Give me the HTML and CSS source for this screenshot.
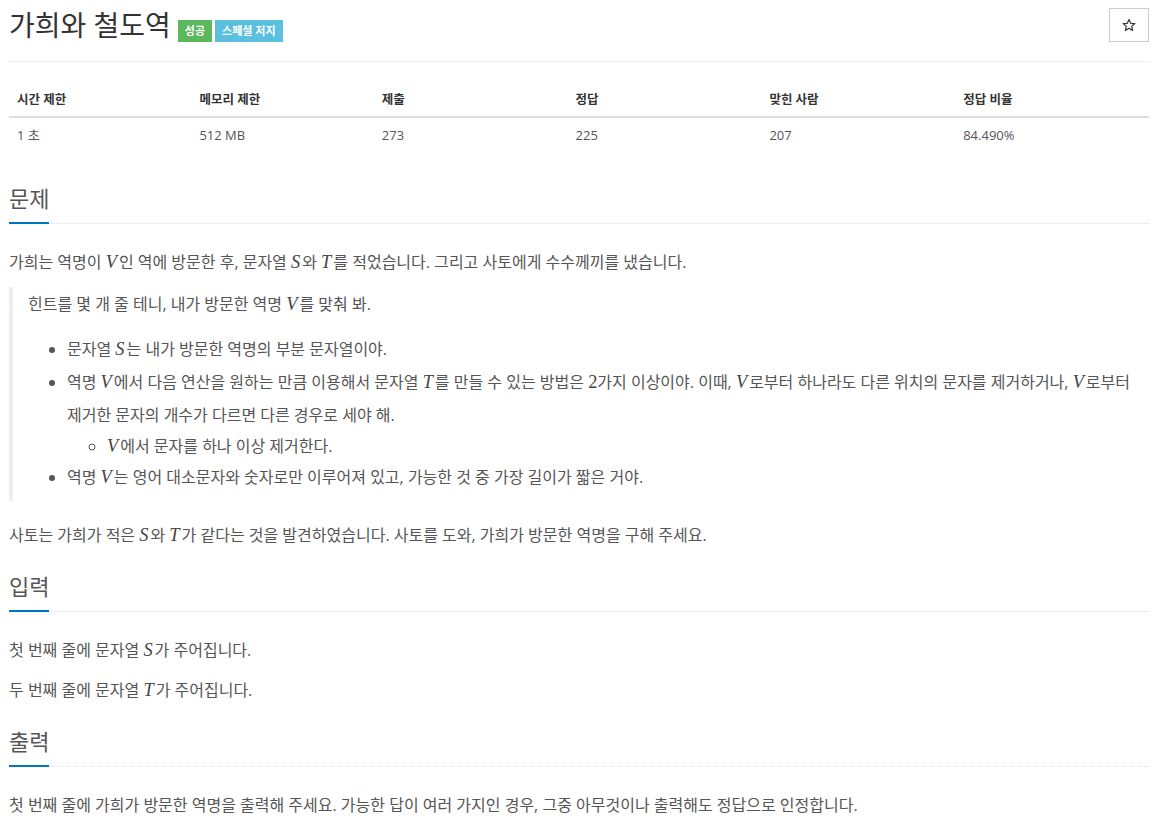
FILE: index.html
```html
<!DOCTYPE html>
<html lang="ko">
<head>
<meta charset="utf-8">
<title>가희와 철도역</title>
<link rel="stylesheet" href="styles.css">
</head>
<body>
<div class="container">
  <div class="page-header">
    <h1 class="title">
      <span class="title-text">가희와 철도역</span>
      <span class="label label-success">성공</span>
      <span class="label label-info">스페셜 저지</span>
    </h1>
    <button class="star-btn" type="button" aria-label="즐겨찾기">
      <svg width="14" height="14" viewBox="0 0 24 24"><path d="M12 2.5l2.9 6.6 7.1.6-5.4 4.7 1.6 7-6.2-3.7-6.2 3.7 1.6-7L2 9.7l7.1-.6z" fill="none" stroke="#333" stroke-width="2" stroke-linejoin="round"/></svg>
    </button>
  </div>

  <table class="info-table">
    <colgroup>
      <col class="c16"><col class="c16"><col class="c17"><col class="c17"><col class="c17"><col class="c17">
    </colgroup>
    <thead>
      <tr><th>시간 제한</th><th>메모리 제한</th><th>제출</th><th>정답</th><th>맞힌 사람</th><th>정답 비율</th></tr>
    </thead>
    <tbody>
      <tr><td>1 초</td><td>512 MB</td><td>273</td><td>225</td><td>207</td><td>84.490%</td></tr>
    </tbody>
  </table>

  <section class="problem-section">
    <div class="headline"><h2>문제</h2></div>
    <div class="problem-text">
      <p>가희는 역명이 <i class="m">V</i>인 역에 방문한 후, 문자열 <i class="m">S</i>와 <i class="m">T</i>를 적었습니다. 그리고 사토에게 수수께끼를 냈습니다.</p>
      <blockquote>
        <p>힌트를 몇 개 줄 테니, 내가 방문한 역명 <i class="m">V</i>를 맞춰 봐.</p>
        <ul>
          <li>문자열 <i class="m">S</i>는 내가 방문한 역명의 부분 문자열이야.</li>
          <li>역명 <i class="m">V</i>에서 다음 연산을 원하는 만큼 이용해서 문자열 <i class="m">T</i>를 만들 수 있는 방법은 <span class="mn">2</span>가지 이상이야. 이때, <i class="m">V</i>로부터 하나라도 다른 위치의 문자를 제거하거나, <i class="m">V</i>로부터 제거한 문자의 개수가 다르면 다른 경우로 세야 해.
            <ul>
              <li><i class="m">V</i>에서 문자를 하나 이상 제거한다.</li>
            </ul>
          </li>
          <li>역명 <i class="m">V</i>는 영어 대소문자와 숫자로만 이루어져 있고, 가능한 것 중 가장 길이가 짧은 거야.</li>
        </ul>
      </blockquote>
      <p>사토는 가희가 적은 <i class="m">S</i>와 <i class="m">T</i>가 같다는 것을 발견하였습니다. 사토를 도와, 가희가 방문한 역명을 구해 주세요.</p>
    </div>
  </section>

  <section class="problem-section">
    <div class="headline"><h2>입력</h2></div>
    <div class="problem-text">
      <p>첫 번째 줄에 문자열 <i class="m">S</i>가 주어집니다.</p>
      <p>두 번째 줄에 문자열 <i class="m">T</i>가 주어집니다.</p>
    </div>
  </section>

  <section class="problem-section">
    <div class="headline"><h2>출력</h2></div>
    <div class="problem-text">
      <p>첫 번째 줄에 가희가 방문한 역명을 출력해 주세요. 가능한 답이 여러 가지인 경우, 그중 아무것이나 출력해도 정답으로 인정합니다.</p>
    </div>
  </section>
</div>
</body>
</html>
```

FILE: styles.css
```css
html, body {
  margin: 0;
  padding: 0;
  background: #fff;
}
body {
  font-family: "Open Sans", "Noto Sans CJK KR", sans-serif;
  color: #555;
  font-size: 14px;
}
.container {
  padding: 0 9px;
}
.page-header {
  display: flex;
  align-items: flex-start;
  justify-content: space-between;
  padding-top: 6px;
  padding-bottom: 17px;
  border-bottom: 1px solid #eee;
}
.title {
  margin: 0;
  display: flex;
  align-items: center;
  font-weight: 400;
  line-height: 38px;
}
.title-text {
  font-size: 28px;
  color: #333;
}
.label {
  display: inline-block;
  font-size: 11px;
  font-weight: 700;
  line-height: 22px;
  padding: 0 7px;
  color: #fff;
  margin-top: 12px;
}
.label-success {
  background: #5cb85c;
  margin-left: 7px;
}
.label-info {
  background: #5bc0de;
  margin-left: 3px;
}
.star-btn {
  margin-top: 2px;
  width: 40px;
  height: 34px;
  background: #fff;
  border: 1px solid #ccc;
  border-radius: 0;
  display: flex;
  align-items: center;
  justify-content: center;
  padding: 0;
}
.info-table {
  width: 100%;
  border-collapse: collapse;
  margin: 21px 0 31px;
  font-size: 13px;
}
.c16 { width: 16%; }
.c17 { width: 17%; }
.info-table th {
  text-align: left;
  font-weight: 700;
  font-size: 12.5px;
  color: #333;
  padding: 8px;
  line-height: 17px;
  border-bottom: 2px solid #ddd;
}
.info-table td {
  padding: 8px;
  line-height: 18px;
  color: #555;
}
.headline {
  margin: 21px 0 23px;
  border-bottom: 1px dotted #d8dfe7;
}
.headline h2 {
  display: inline-block;
  margin: 0 0 -1px;
  font-size: 22px;
  font-weight: 400;
  line-height: 30px;
  color: #555;
  padding-bottom: 9px;
  border-bottom: 2px solid #0076c0;
}
.problem-text {
  font-size: 16px;
  line-height: 30px;
}
.problem-text p {
  margin: 0 0 10px;
}
.m {
  font-family: "Liberation Serif", "DejaVu Serif", serif;
  font-style: italic;
  font-size: 1.15em;
  color: #444;
  margin-right: 2px;
}
.mn {
  font-family: "Liberation Serif", "DejaVu Serif", serif;
  font-size: 1.15em;
  color: #444;
}
blockquote {
  margin: 0 0 19px;
  padding: 2px 15px 7px;
  border-left: 4px solid #eee;
}
blockquote p {
  margin: 0 0 14px !important;
}
blockquote ul {
  margin: 0;
  padding-left: 39px;
}
blockquote ul ul {
  padding-left: 40px;
}
blockquote li {
  line-height: 33px;
}
blockquote ul ul li {
  line-height: 29px;
}
```
